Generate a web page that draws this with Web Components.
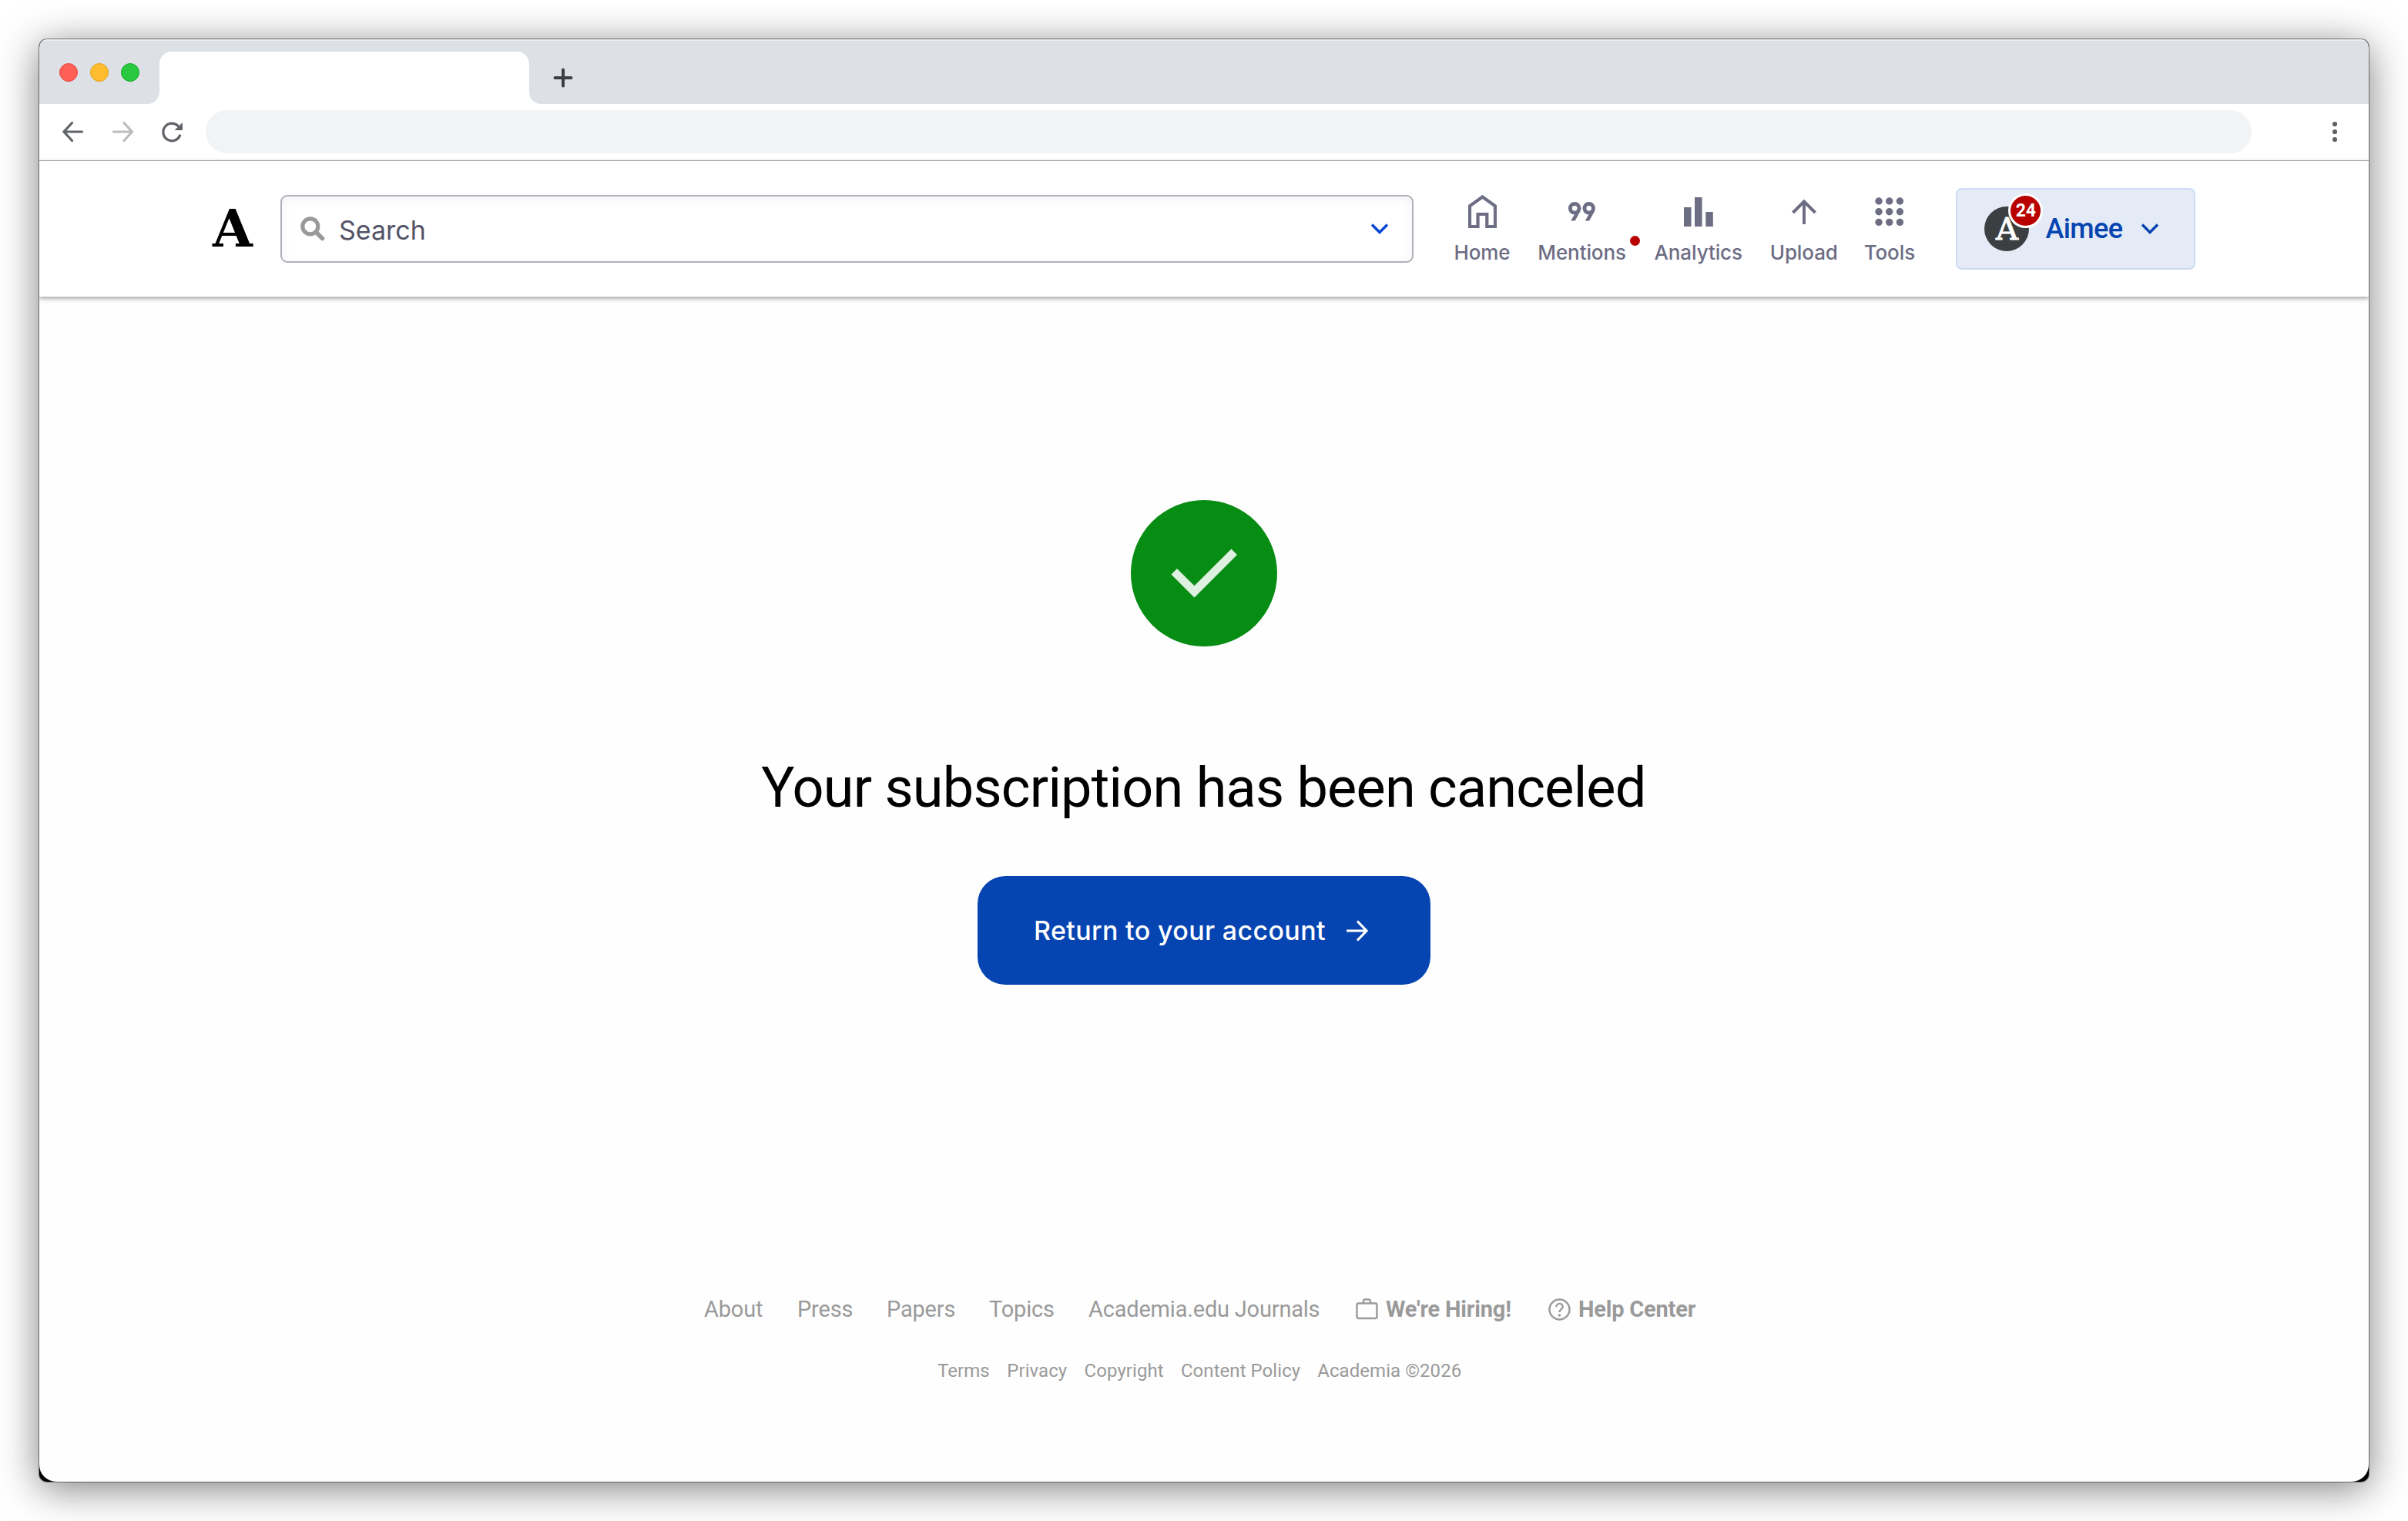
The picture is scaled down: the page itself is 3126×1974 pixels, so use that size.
<!DOCTYPE html>
<html lang="en">
<head>
<meta charset="utf-8">
<title>Academia.edu</title>
<style>
    body {
        margin: 0;
        width: 3126px;
        height: 1974px;
        overflow: hidden;
        background: #fff;
        font-family: Roboto, "Liberation Sans", sans-serif;
    }
</style>
</head>
<body>
<browser-window>
    <site-header>
        <search-box>Search</search-box>
        <site-nav>
            <nav-item icon="home">Home</nav-item>
            <nav-item icon="mentions" dot>Mentions</nav-item>
            <nav-item icon="analytics">Analytics</nav-item>
            <nav-item icon="upload">Upload</nav-item>
            <nav-item icon="tools">Tools</nav-item>
        </site-nav>
        <user-menu count="24">Aimee</user-menu>
    </site-header>
    <cancel-message>
        <span slot="title">Your subscription has been canceled</span>
        <span slot="action">Return to your account</span>
    </cancel-message>
    <site-footer></site-footer>
</browser-window>

<script>
const icons = {
    home: '<svg width="37" height="43" viewBox="0 0 37 43"><path d="M2 41V14.300L18.500 2.500L35 14.300V41H24.300V25H12.500V41Z" fill="none" stroke="#6d6d84" stroke-width="4.200"/></svg>',
    mentions: '<svg width="35" height="25" viewBox="0 0 35 25"><g fill="none" stroke="#6d6d84" stroke-width="4.900"><circle cx="8.200" cy="8.300" r="5.800"/><circle cx="26.700" cy="8.300" r="5.800"/></g><path d="M3.300 24.500L9.800 13L15.800 11.500L8.700 24.500ZM21.800 24.500L28.300 13L34.300 11.500L27.200 24.500Z" fill="#6d6d84"/></svg>',
    analytics: '<svg width="38" height="38" viewBox="0 0 38 38"><path d="M0 13h9.500v25H0zM14 0h9.500v38H14zM28.300 19h9.500v19h-9.500z" fill="#6d6d84"/></svg>',
    upload: '<svg width="32" height="32" viewBox="0 0 32 32"><path d="M16 32V3M1.500 17L16 2.500L30.500 17" fill="none" stroke="#6d6d84" stroke-width="4"/></svg>',
    tools: '<svg width="38" height="38" viewBox="0 0 38 38"><g fill="#6d6d84">' +
        [5, 18.7, 32.4].map((y) => [5, 18.7, 32.4].map((x) => `<circle cx="${x}" cy="${y}" r="4.700"/>`).join('')).join('') +
        '</g></svg>'
};

class BrowserWindow extends HTMLElement {
    constructor() {
        super();
        this.attachShadow({ mode: 'open' }).innerHTML = `
            <style>
                :host {
                    display: flex;
                    flex-direction: column;
                    width: 3024px;
                    height: 1872px;
                    margin: 51px;
                    border-radius: 10px;
                    background: #000;
                    overflow: hidden;
                    box-shadow: 0 0 0 1px rgba(0, 0, 0, 0.45), 0 8px 52px rgba(0, 0, 0, 0.52);
                }
                .strip {
                    display: flex;
                    align-items: flex-end;
                    flex: none;
                    height: 84px;
                    background: #dde0e5;
                    box-shadow: inset 0 2px 0 #eceef1;
                }
                .lights {
                    box-sizing: border-box;
                    display: flex;
                    gap: 16px;
                    padding: 0 0 29px 26px;
                    width: 140px;
                }
                .lights i {
                    box-sizing: border-box;
                    width: 24px;
                    height: 24px;
                    border-radius: 50%;
                    background: #ff5f57;
                    border: 1px solid #e2463f;
                }
                .lights i:nth-child(2) { background: #febc2e; border-color: #e1a116; }
                .lights i:nth-child(3) { background: #28c840; border-color: #12ac28; }
                .plus { padding: 0 0 21px 15px; }
                svg { display: block; }
                .toolbar {
                    display: flex;
                    align-items: center;
                    flex: none;
                    height: 73px;
                    padding: 0 37px 0 29px;
                    background: #fff;
                    border-bottom: 1px solid #b1b1b3;
                }
                .toolbar svg { margin-bottom: 1px; }
                .address {
                    flex: none;
                    width: 2656px;
                    height: 56px;
                    margin: 0 104px 1px 27px;
                    border-radius: 28px;
                    background: #f1f3f4;
                }
                .page {
                    flex: 1;
                    background: #fefefe;
                    border-radius: 0 0 22px 22px;
                }
            </style>
            <div class="strip">
                <div class="lights"><i></i><i></i><i></i></div>
                <svg width="512" height="68" viewBox="-16 0 512 68"><path d="M-16 68C-7 68 0 61 0 52V16C0 7 7 0 16 0H464C473 0 480 7 480 16V52C480 61 487 68 496 68Z" fill="#fff"/></svg>
                <div class="plus">
                    <svg width="26" height="26" viewBox="0 0 26 26"><path d="M13 2.500V23.500M2.500 13H23.500" stroke="#3c4043" stroke-width="4" stroke-linecap="round"/></svg>
                </div>
            </div>
            <div class="toolbar">
                <svg width="160" height="32" viewBox="0 0 160 32" fill="none" stroke="#5f6368" stroke-width="3.200" stroke-linecap="round">
                    <path d="M26.500 16H3.500M13.500 4.500L3 16L13.500 27.500"/>
                    <path d="M67.500 16H91M81 4.500L91.500 16L81 27.500" stroke="#bbbcbe"/>
                    <path d="M153.500 21A11.300 11.300 0 1 1 151 8.300"/>
                    <path d="M157 4V14H146.500Z" fill="#5f6368" stroke="none"/>
                </svg>
                <div class="address"></div>
                <svg width="8" height="28" viewBox="0 0 8 28" fill="#5f6368"><circle cx="4" cy="4" r="3.100"/><circle cx="4" cy="14" r="3.100"/><circle cx="4" cy="24" r="3.100"/></svg>
            </div>
            <div class="page"><slot></slot></div>
        `;
    }
}

class SiteHeader extends HTMLElement {
    constructor() {
        super();
        this.attachShadow({ mode: 'open' }).innerHTML = `
            <style>
                :host {
                    display: flex;
                    align-items: center;
                    height: 176px;
                    padding-left: 225px;
                    background: #fff;
                    box-shadow: 0 2px 6px rgba(0, 0, 0, 0.4);
                }
                .logo {
                    width: 88px;
                    font: bold 67px/70px "DejaVu Serif", serif;
                    color: #000;
                }
            </style>
            <div class="logo">A</div>
            <slot></slot>
        `;
    }
}

class SearchBox extends HTMLElement {
    constructor() {
        super();
        this.attachShadow({ mode: 'open' }).innerHTML = `
            <style>
                :host {
                    box-sizing: border-box;
                    display: flex;
                    align-items: center;
                    flex: none;
                    width: 1471px;
                    height: 88px;
                    padding: 0 30px 0 24px;
                    border: 2px solid #b0b0ba;
                    border-radius: 9px;
                    background: #fff;
                    box-shadow: inset 0 3px 14px rgba(0, 0, 0, 0.05);
                    font: 34px/40px Inter, sans-serif;
                    color: #535366;
                }
                .text { flex: 1; padding: 3px 0 0 18px; }
            </style>
            <svg width="32" height="32" viewBox="0 0 32 32" fill="none" stroke="#999"><circle cx="12.800" cy="12.800" r="10" stroke-width="5.200"/><path d="M21.500 21.500L28.500 28.500" stroke-width="5.600" stroke-linecap="round"/></svg>
            <div class="text"><slot></slot></div>
            <svg width="24" height="16" viewBox="0 0 24 16"><path d="M2 2.500L12 12.500L22 2.500" fill="none" stroke="#0645d1" stroke-width="3.400"/></svg>
        `;
    }
}

class SiteNav extends HTMLElement {
    constructor() {
        super();
        this.attachShadow({ mode: 'open' }).innerHTML = `
            <style>
                :host {
                    display: grid;
                    grid-template-columns: 72px 114px 115px 86px 63px;
                    column-gap: 36.600px;
                    margin: 1px 55px 0 53px;
                    flex: none;
                }
            </style>
            <slot></slot>
        `;
    }
}

class NavItem extends HTMLElement {
    constructor() {
        super();
        this.attachShadow({ mode: 'open' });
    }

    connectedCallback() {
        this.shadowRoot.innerHTML = `
            <style>
                :host {
                    position: relative;
                    display: flex;
                    flex-direction: column;
                    align-items: center;
                    white-space: nowrap;
                    font: 500 26px/30px Inter, sans-serif;
                    letter-spacing: -0.100px;
                    color: #6d6d84;
                }
                .icon {
                    display: flex;
                    align-items: center;
                    height: 44px;
                    margin-bottom: 16px;
                }
                .dot {
                    position: absolute;
                    right: -18px;
                    top: 53px;
                    width: 13px;
                    height: 13px;
                    border-radius: 50%;
                    background: #b80000;
                }
            </style>
            <div class="icon">${icons[this.getAttribute('icon')]}</div>
            <slot></slot>
            ${this.hasAttribute('dot') ? '<div class="dot"></div>' : ''}
        `;
    }
}

class UserMenu extends HTMLElement {
    constructor() {
        super();
        this.attachShadow({ mode: 'open' });
    }

    connectedCallback() {
        this.shadowRoot.innerHTML = `
            <style>
                :host {
                    box-sizing: border-box;
                    display: flex;
                    align-items: center;
                    flex: none;
                    width: 311px;
                    height: 106px;
                    padding-left: 35px;
                    border: 2px solid #cddcf3;
                    border-radius: 8px;
                    background: #e4eaf6;
                    font-size: 36px;
                    font-weight: 500;
                    letter-spacing: -0.600px;
                    color: #0645b1;
                }
                .avatar {
                    position: relative;
                    width: 58px;
                    height: 58px;
                    border-radius: 50%;
                    background: #3b3f42;
                    color: #fff;
                    font: 40px/58px "DejaVu Serif", serif;
                    -webkit-text-stroke: 1px #fff;
                    letter-spacing: 0;
                    text-align: center;
                }
                .badge {
                    position: absolute;
                    left: 31px;
                    top: -17px;
                    width: 39px;
                    height: 39px;
                    border: 3px solid #fff;
                    border-radius: 50%;
                    background: #b80000;
                    font: bold 23px/39px Roboto, sans-serif;
                    -webkit-text-stroke: 0;
                }
                .name { width: 101px; margin: 0 23px 0 21px; }
            </style>
            <div class="avatar">A<div class="badge">${this.getAttribute('count')}</div></div>
            <div class="name"><slot></slot></div>
            <svg width="24" height="16" viewBox="0 0 24 16"><path d="M2 2.500L12 12.500L22 2.500" fill="none" stroke="#0645b1" stroke-width="3.400"/></svg>
        `;
    }
}

class CancelMessage extends HTMLElement {
    constructor() {
        super();
        this.attachShadow({ mode: 'open' }).innerHTML = `
            <style>
                :host {
                    display: flex;
                    flex-direction: column;
                    align-items: center;
                    padding-top: 264px;
                }
                svg { display: block; }
                h1 {
                    margin: 142px 0 72px;
                    padding-right: 1px;
                    font-size: 72px;
                    font-weight: 400;
                    line-height: 84px;
                    letter-spacing: -0.770px;
                    white-space: nowrap;
                    color: #000;
                }
                .button {
                    box-sizing: border-box;
                    display: flex;
                    align-items: center;
                    width: 588px;
                    height: 141px;
                    padding-left: 73px;
                    border-radius: 36px;
                    background: #0645b1;
                    color: #fff;
                    font: 550 34px/40px Inter, sans-serif;
                    letter-spacing: 0.350px;
                    white-space: nowrap;
                }
                .label { width: 406px; }
            </style>
            <svg width="190" height="190" viewBox="0 0 190 190"><circle cx="95" cy="95" r="95" fill="#078c14"/><path d="M52.500 96.500L60 89L82.500 111.300L130.500 63.500L138 71L82.500 126.500Z" fill="#dff0e0"/></svg>
            <h1><slot name="title"></slot></h1>
            <div class="button">
                <div class="label"><slot name="action"></slot></div>
                <svg width="28" height="28" viewBox="0 0 28 28"><path d="M0 14H25M14 1.500L26 14L14 26.500" fill="none" stroke="#fff" stroke-width="3.200"/></svg>
            </div>
        `;
    }
}

class SiteFooter extends HTMLElement {
    constructor() {
        super();
        this.attachShadow({ mode: 'open' }).innerHTML = `
            <style>
                :host { display: block; padding-top: 401px; color: #9a9a9a; }
                nav { display: grid; justify-content: start; align-items: center; white-space: nowrap; }
                .links {
                    grid-template-columns: 76px 71px 88px 84px 302px 205px 192px;
                    column-gap: 45px;
                    padding-left: 863px;
                    font-size: 29px;
                    line-height: 40px;
                    letter-spacing: -0.200px;
                }
                .links svg { display: block; }
                .legal {
                    grid-template-columns: 68px 78px 103px 155px 188px;
                    column-gap: 22.300px;
                    margin-top: 45px;
                    padding-left: 1166px;
                    font-size: 24px;
                    line-height: 30px;
                    letter-spacing: 0.060px;
                }
                b { display: flex; align-items: center; gap: 10px; }
            </style>
            <nav class="links">
                <span>About</span>
                <span>Press</span>
                <span>Papers</span>
                <span>Topics</span>
                <span>Academia.edu Journals</span>
                <b><svg width="29" height="28" viewBox="0 0 29 28" fill="none" stroke="#9a9a9a" stroke-width="2.400"><rect x="1.500" y="6.500" width="26" height="19.500" rx="2"/><path d="M10 6.500V3.500Q10 1.500 12 1.500H17Q19 1.500 19 3.500V6.500"/></svg>We're Hiring!</b>
                <b><svg width="29" height="29" viewBox="0 0 29 29" fill="none" stroke="#9a9a9a" stroke-width="2.400"><circle cx="14.500" cy="14.500" r="13"/><path d="M10.300 11.300C10.300 5.500 18.700 5.500 18.700 11C18.700 14 14.500 14.500 14.500 18"/><circle cx="14.500" cy="22" r="1.800" fill="#9a9a9a" stroke="none"/></svg>Help Center</b>
            </nav>
            <nav class="legal">
                <span>Terms</span>
                <span>Privacy</span>
                <span>Copyright</span>
                <span>Content Policy</span>
                <span>Academia ©2026</span>
            </nav>
        `;
    }
}

customElements.define('browser-window', BrowserWindow);
customElements.define('site-header', SiteHeader);
customElements.define('search-box', SearchBox);
customElements.define('site-nav', SiteNav);
customElements.define('nav-item', NavItem);
customElements.define('user-menu', UserMenu);
customElements.define('cancel-message', CancelMessage);
customElements.define('site-footer', SiteFooter);
</script>
</body>
</html>
